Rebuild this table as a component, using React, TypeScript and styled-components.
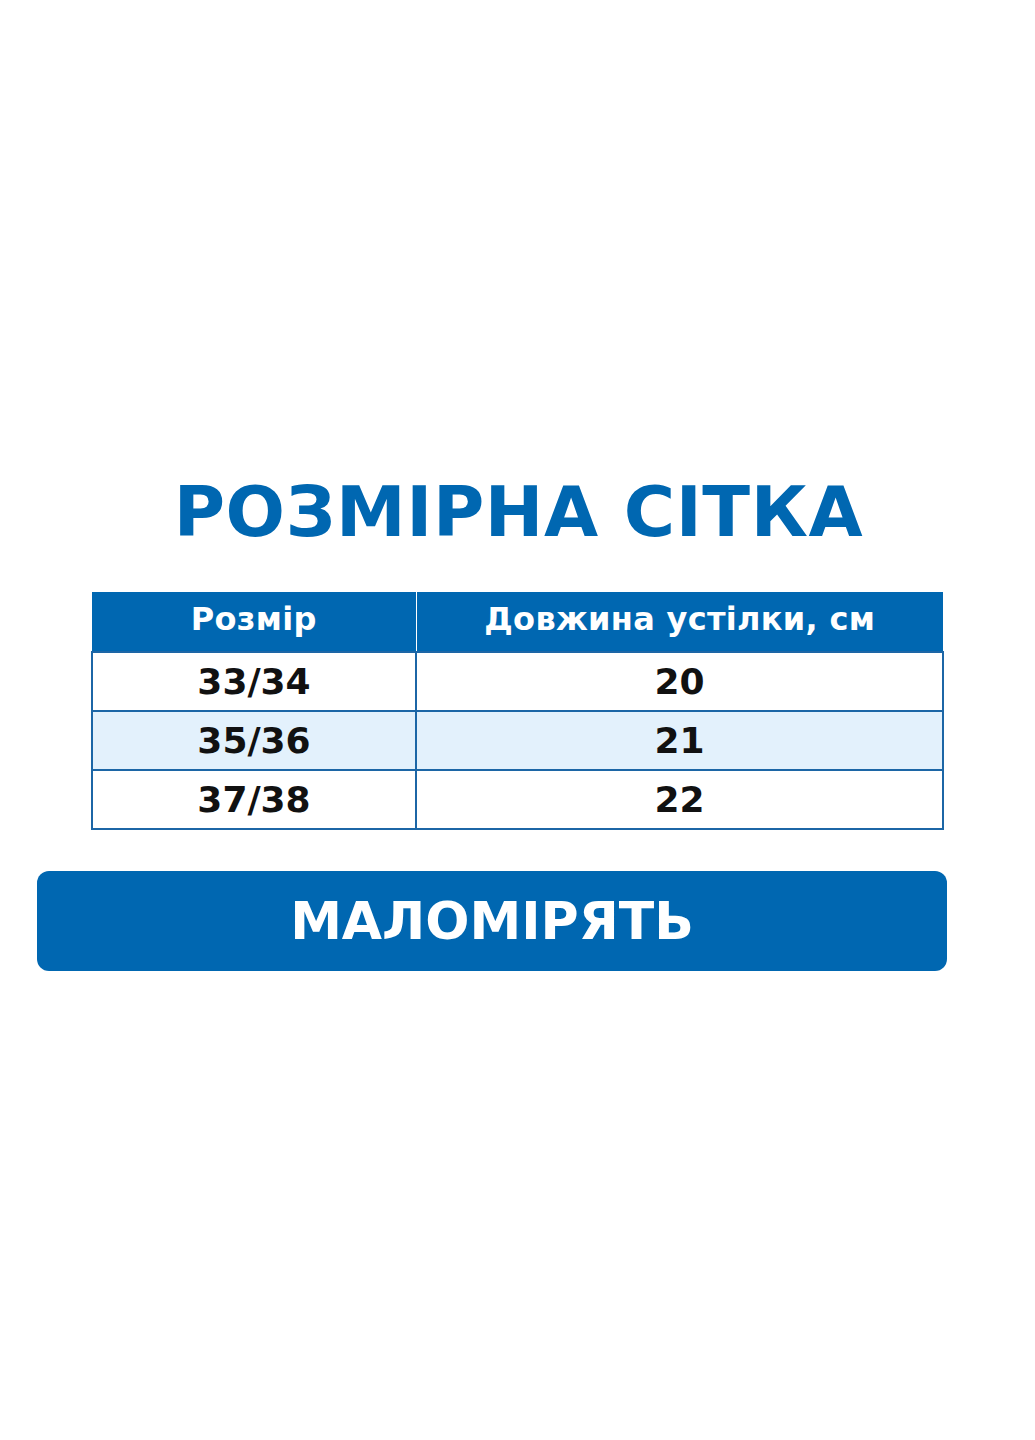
import React from "react";
import styled, { createGlobalStyle } from "styled-components";

const Global = createGlobalStyle`
  html, body { margin: 0; padding: 0; background: #ffffff; }
  body { font-family: "DejaVu Sans", "Noto Sans", sans-serif; }
`;

const BLUE = "#0067b1";
const LINE = "#1c66a6";

const Page = styled.main`
  width: 1035px;
  min-height: 1440px;
  display: flex;
  flex-direction: column;
  padding-top: 477px;
  box-sizing: border-box;
`;

const Title = styled.h1`
  margin: 0;
  text-align: center;
  font-family: "DejaVu Sans", sans-serif;
  font-weight: 700;
  font-size: 70px;
  line-height: 70px;
  letter-spacing: 0.6px;
  color: ${BLUE};
  padding-left: 2px;
`;

const Table = styled.table`
  margin: 45px 0 0 91px;
  width: 853px;
  border-collapse: collapse;
  table-layout: fixed;
  font-family: "DejaVu Sans", sans-serif;
  font-weight: 700;
`;

const HeadCell = styled.th<{ $w?: number }>`
  width: ${(p) => (p.$w ? `${p.$w}px` : "auto")};
  height: 60px;
  box-sizing: border-box;
  padding: 0 0 6px 0;
  background: ${BLUE};
  color: #ffffff;
  font-size: 32px;
  line-height: 36px;
  letter-spacing: 0.3px;
  text-align: center;
  border-left: 1px solid #ffffff;
  &:first-child { border-left: none; }
`;

const Row = styled.tr<{ $alt?: boolean }>`
  background: ${(p) => (p.$alt ? "#e3f1fc" : "#ffffff")};
`;

const Cell = styled.td`
  height: 57px;
  padding: 0;
  border: 2px solid ${LINE};
  text-align: center;
  font-size: 36px;
  color: #111111;
`;

const Banner = styled.div`
  margin: 41px 0 0 37px;
  width: 910px;
  height: 100px;
  border-radius: 12px;
  background: ${BLUE};
  color: #ffffff;
  display: flex;
  align-items: center;
  justify-content: center;
  font-family: "DejaVu Sans", sans-serif;
  font-weight: 700;
  font-size: 52px;
`;

const rows = [
  { size: "33/34", len: "20" },
  { size: "35/36", len: "21" },
  { size: "37/38", len: "22" },
];

export default function App() {
  return (
    <>
      <Global />
      <Page>
        <Title>РОЗМІРНА СІТКА</Title>
        <Table>
          <thead>
            <tr>
              <HeadCell $w={324}>Розмір</HeadCell>
              <HeadCell>Довжина устілки, см</HeadCell>
            </tr>
          </thead>
          <tbody>
            {rows.map((r, i) => (
              <Row key={r.size} $alt={i === 1}>
                <Cell>{r.size}</Cell>
                <Cell>{r.len}</Cell>
              </Row>
            ))}
          </tbody>
        </Table>
        <Banner>МАЛОМІРЯТЬ</Banner>
      </Page>
    </>
  );
}
